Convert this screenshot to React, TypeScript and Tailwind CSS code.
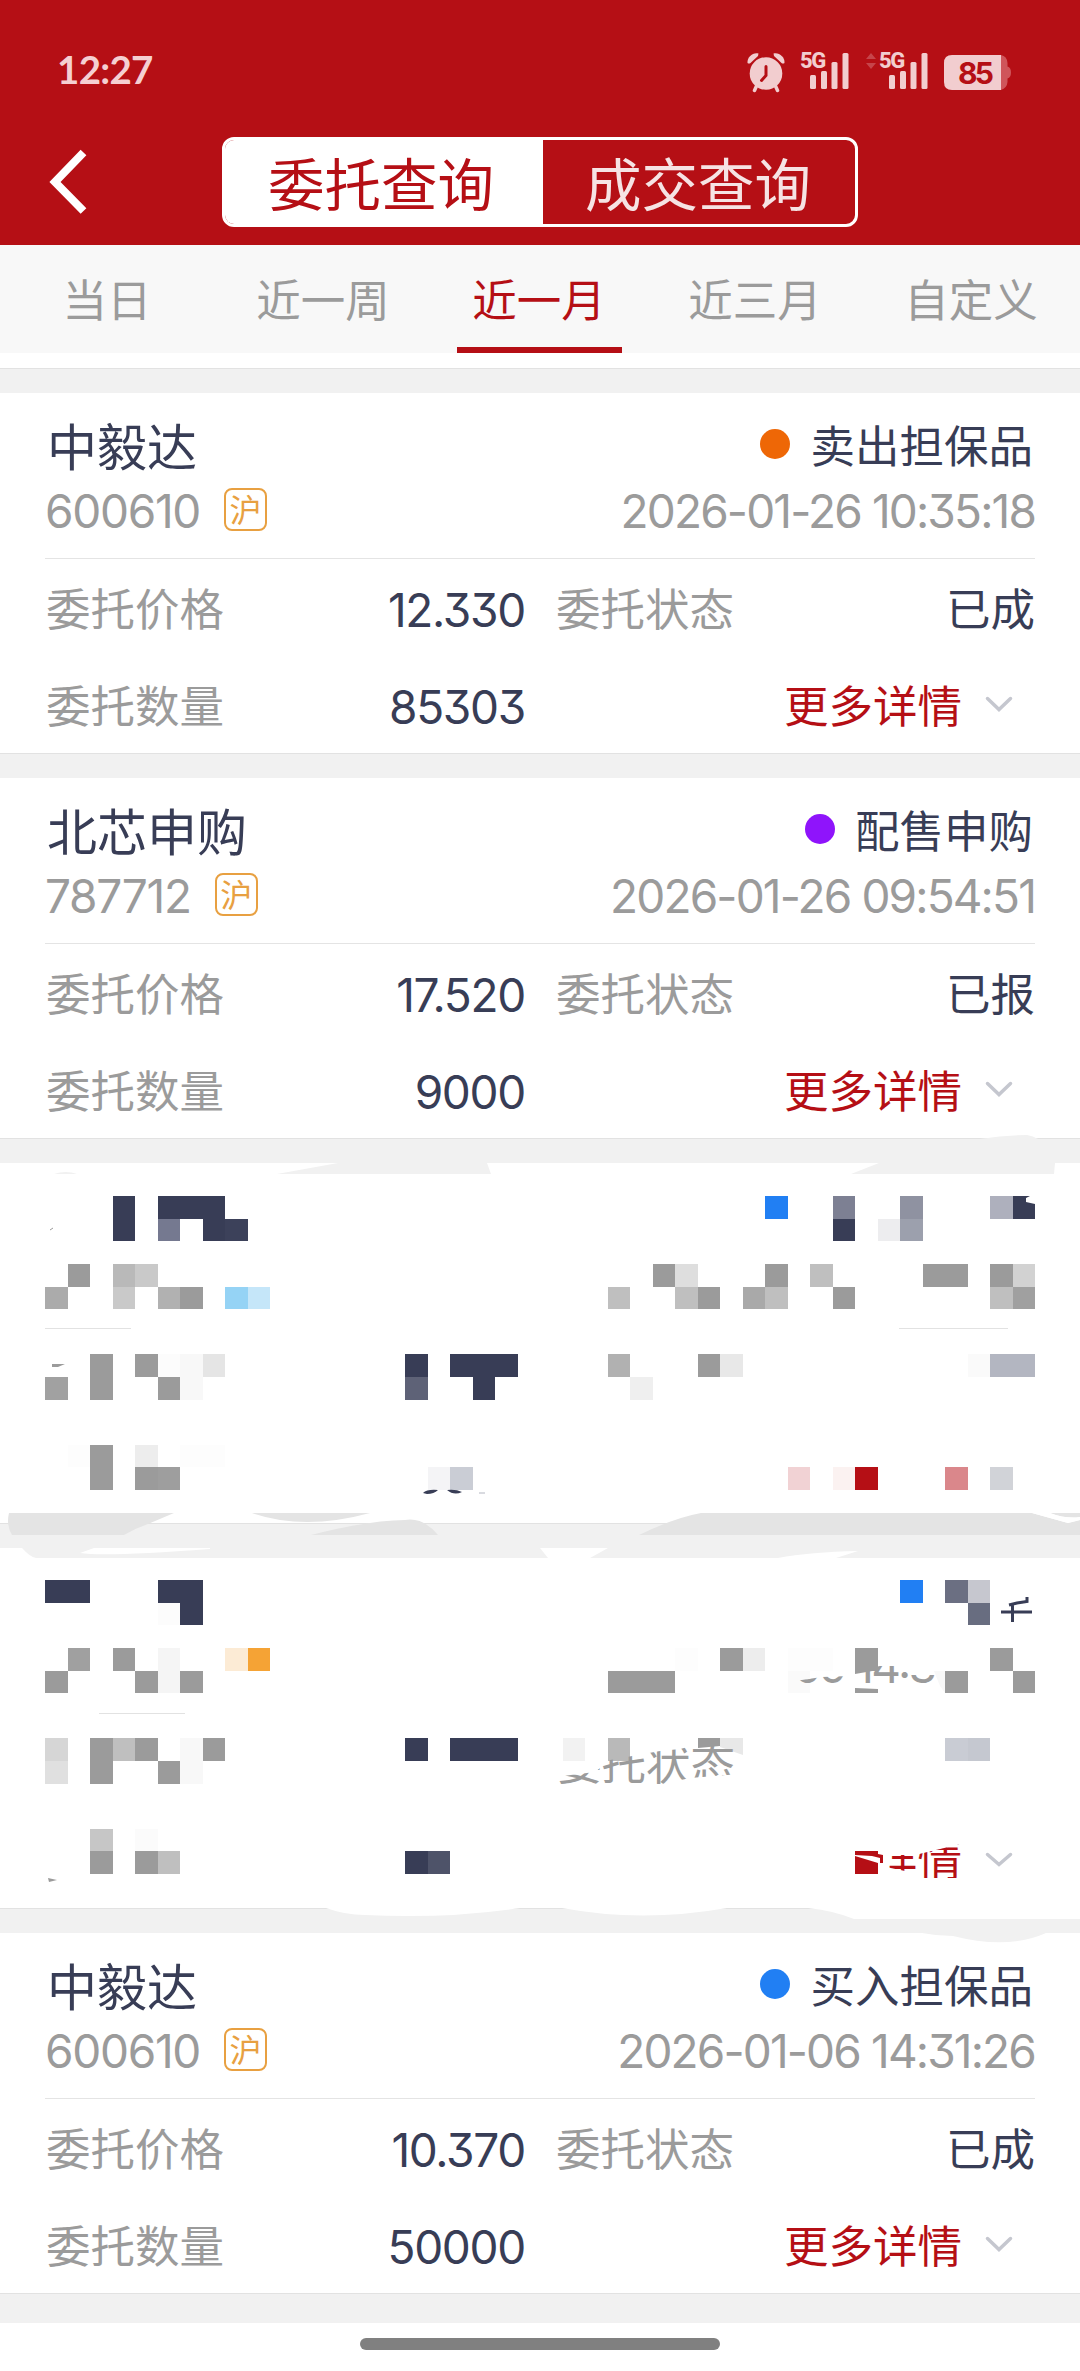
import { clsx } from "clsx";

type Cell = [col: number, row: number, fill: string, span?: number];

const RED = "#b50f15";
const INK = "#383d56";
const GREY = "#9b9b9b";
const BLUE = "#217ff3";

const TABS = ["当日", "近一周", "近一月", "近三月", "自定义"];

const FIRST_ORDERS = [
  {
    name: "中毅达",
    code: "600610",
    side: "卖出担保品",
    dot: "bg-[#ee6706]",
    time: "2026-01-26 10:35:18",
    price: "12.330",
    amount: "85303",
    status: "已成",
  },
  {
    name: "北芯申购",
    code: "787712",
    side: "配售申购",
    dot: "bg-[#8f14fb]",
    time: "2026-01-26 09:54:51",
    price: "17.520",
    amount: "9000",
    status: "已报",
  },
];

const LAST_ORDER = {
  name: "中毅达",
  code: "600610",
  side: "买入担保品",
  dot: "bg-[#217ff3]",
  time: "2026-01-06 14:31:26",
  price: "10.370",
  amount: "50000",
  status: "已成",
};

// [column, row, fill, columns spanned]
const MOSAIC_A: Cell[] = [
  [3, 0, INK], [5, 0, INK, 3], [32, 0, BLUE], [35, 0, "#7d8093"], [38, 0, "#8f92a1"],
  [42, 0, "#aeb0bd"], [43, 0, INK],
  [3, 1, INK], [5, 1, "#757990"], [7, 1, INK], [8, 1, "#3c415a"], [35, 1, INK],
  [37, 1, "#ededef"], [38, 1, "#9ca0ad"],
  [1, 2, GREY], [3, 2, "#b9b9b9"], [4, 2, "#c9c9c9"], [27, 2, GREY], [28, 2, "#dedede"],
  [32, 2, GREY], [34, 2, "#bfbfbf"], [39, 2, GREY, 2], [42, 2, GREY], [43, 2, "#d2d2d2"],
  [0, 3, "#ababab"], [3, 3, "#c9c9c9"], [5, 3, "#b1b1b1"], [6, 3, GREY], [8, 3, "#95d3f5"],
  [9, 3, "#c5e6f9"], [25, 3, "#bfbfbf"], [28, 3, "#bfbfbf"], [29, 3, GREY], [31, 3, "#a9a9a9"],
  [32, 3, "#bfbfbf"], [35, 3, GREY], [42, 3, "#bfbfbf"], [43, 3, "#a0a0a0"],
  [2, 4, GREY], [4, 4, GREY], [5, 4, "#fcfcfc"], [6, 4, "#f8f8f8"], [7, 4, "#e5e5e5"],
  [16, 4, INK], [18, 4, INK, 3], [25, 4, "#b1b1b1"], [29, 4, GREY], [30, 4, "#e8e8e8"],
  [41, 4, "#fafafa"], [42, 4, "#b3b6c1", 2],
  [0, 5, "#a1a1a1"], [2, 5, GREY], [5, 5, GREY], [6, 5, "#f8f8f8"], [16, 5, "#5e6277"],
  [19, 5, INK], [26, 5, "#efefef"],
  [1, 6, "#fdfdfd"], [2, 6, GREY], [4, 6, "#ededed"], [6, 6, "#fdfdfd", 2],
  [2, 7, GREY], [4, 7, GREY], [5, 7, "#9e9e9e"], [17, 7, "#f4f4f6"], [18, 7, "#cacdd5"],
  [33, 7, "#f1d2d4"], [35, 7, "#fbf2f1"], [36, 7, RED], [40, 7, "#da878b"], [42, 7, "#d1d3d8"],
];

const MOSAIC_B: Cell[] = [
  [0, 0, INK, 2], [5, 0, INK, 2], [38, 0, BLUE], [40, 0, "#6b6f82"], [41, 0, "#c6c7cf"],
  [5, 1, "#fcfcfc"], [6, 1, INK], [41, 1, "#686d80"],
  [1, 2, "#a0a0a0"], [3, 2, GREY], [5, 2, "#f5f5f5"], [8, 2, "#fcebd5"], [9, 2, "#f5a335"],
  [28, 2, "#fdfdfd"], [30, 2, GREY], [31, 2, "#ededed"], [33, 2, "#fdfdfd", 2], [36, 2, GREY],
  [42, 2, GREY],
  [0, 3, GREY], [4, 3, GREY], [5, 3, "#f5f5f5"], [6, 3, GREY], [25, 3, GREY, 3],
  [33, 3, "#fafafa"], [40, 3, GREY], [43, 3, GREY],
  [0, 4, "#d6d6d6"], [2, 4, GREY], [3, 4, "#bfbfbf"], [4, 4, GREY], [6, 4, "#f8f8f8"],
  [7, 4, GREY], [16, 4, INK], [18, 4, INK, 3], [23, 4, "#f2f2f2"], [25, 4, "#b9b9b9"],
  [40, 4, "#c9ccd4"], [41, 4, "#c5c8d0"],
  [0, 5, "#e0e0e0"], [2, 5, GREY], [5, 5, GREY], [6, 5, "#f8f8f8"],
  [2, 6, "#c6c6c6"], [4, 6, "#fbfbfb"],
  [2, 7, GREY], [4, 7, GREY], [5, 7, "#bfbfbf"], [16, 7, INK], [17, 7, "#4e5369"],
];

const COL = 22.5;

// top and bottom of each mosaic row
const ROW_EDGES = [
  [33, 56],
  [56, 78],
  [101, 124],
  [124, 146],
  [191, 214],
  [214, 237],
  [282, 304],
  [304, 327],
];

function Mosaic({ cells, shift = 0 }: { cells: Cell[]; shift?: number }) {
  return (
    <g shapeRendering="crispEdges">
      {cells.map(([col, row, fill, span = 1]) => {
        const x = Math.round(45 + col * COL);
        const [top, bottom] = ROW_EDGES[row];
        return (
          <rect
            key={`${col}-${row}`}
            x={x}
            y={top + shift}
            width={Math.round(45 + (col + span) * COL) - x}
            height={bottom - top}
            fill={fill}
          />
        );
      })}
    </g>
  );
}

function Chevron() {
  return (
    <svg className="h-4 w-7" viewBox="0 0 28 16" fill="none">
      <path
        d="M2.500 2.500 14 13.500 25.500 2.500"
        stroke="#c5c7cf"
        strokeWidth="3.500"
        strokeLinecap="round"
      />
    </svg>
  );
}

function Signal() {
  return (
    <div className="flex h-[38px] items-end">
      <span className="mr-[-14px] w-6 self-start pt-px font-['Roboto'] text-[22px] font-extrabold leading-[18px] tracking-[-1.500px] text-[#f2cdcf]">
        5G
      </span>
      <svg width="39" height="37" viewBox="0 0 39 37" fill="#f2cdcf">
        <rect x="0" y="23" width="6" height="14" rx="1.500" />
        <rect x="11" y="19" width="6" height="18" rx="1.500" />
        <rect x="21.500" y="10" width="6" height="27" rx="1.500" />
        <rect x="32.500" y="1" width="6" height="36" rx="1.500" />
      </svg>
    </div>
  );
}

function StatusBar() {
  return (
    <div className="flex h-[137px] items-start justify-between pl-[57px] pr-[69px] pt-[51px]">
      <div className="mt-[-3px] font-['Lato'] text-[38.500px] font-bold leading-[42px] tracking-[-0.700px] text-[#f5cfd2]">
        12:27
      </div>
      <div className="flex items-start">
        <svg width="38" height="42" viewBox="0 0 38 42">
          <g fill="#f2cdcf">
            <circle cx="19" cy="22.500" r="16.300" />
            <path d="M0.500 12C0 6 6 1 11.500 2.500L11 5 3.500 12Q2 13 0.500 12Z" />
            <path d="M37.500 12C38 6 32 1 26.500 2.500L27 5 34.500 12Q36 13 37.500 12Z" />
          </g>
          <path
            d="M9.500 35 7.500 39.500M28.500 35l2 4.500"
            stroke="#f2cdcf"
            strokeWidth="3.500"
            strokeLinecap="round"
          />
          <path
            d="M19 15.500v9l-4.500 5"
            fill="none"
            stroke={RED}
            strokeWidth="3"
            strokeLinecap="round"
          />
        </svg>
        <div className="ml-[15px]">
          <Signal />
        </div>
        <svg className="ml-[17px] mt-0.5" width="10" height="16" viewBox="0 0 10 16">
          <path d="M5 0 10 6H0ZM0 10h10L5 16Z" fill="#c6444a" />
        </svg>
        <div className="ml-[3px]">
          <Signal />
        </div>
        <svg className="ml-4 mt-1" width="67" height="35" viewBox="0 0 67 35">
          <path
            d="M57 0q6 1 6.500 8v3.500q3.500 1 3.500 6t-3.500 6V27q-.5 6-6.500 8Z"
            fill="#cf555a"
          />
          <path d="M8 0H57V35H8Q0 35 0 27V8Q0 0 8 0Z" fill="#f2cdcf" />
          <text
            x="32"
            y="28.500"
            textAnchor="middle"
            fill={RED}
            fontFamily="Inter, sans-serif"
            fontWeight="700"
            fontSize="30"
            textLength="36"
          >
            85
          </text>
        </svg>
      </div>
    </div>
  );
}

function Header() {
  return (
    <header className="h-[245px] bg-[#b50f15]">
      <StatusBar />
      <div className="flex h-[90px] items-center">
        <svg className="ml-[49px] mr-[133px]" width="40" height="66" viewBox="0 0 40 66">
          <path d="M34.500 3.500 6 33 34.500 62" fill="none" stroke="#fff" strokeWidth="8" />
        </svg>
        <div className="flex h-[90px] w-[636px] overflow-hidden rounded-xl border-[3px] border-white text-[56.500px] leading-none">
          <div className="flex w-[318px] items-center justify-center bg-white pb-0.5 pr-1.5 text-[#b50f15]">
            委托查询
          </div>
          <div className="flex flex-1 items-center justify-center pb-0.5 pr-0.5 text-[#f6e3e4]">
            成交查询
          </div>
        </div>
      </div>
    </header>
  );
}

function Tabs() {
  return (
    <nav className="flex h-[108px] bg-[#f8f8f8]">
      {TABS.map((tab) => (
        <div
          key={tab}
          className={clsx(
            "flex w-1/5 flex-col items-center text-[44.500px] leading-none",
            tab === "近一月" ? "text-[#b50f15]" : "text-[#9b9b9b]",
          )}
        >
          <span className="flex h-[102px] items-center pr-0.5 pt-1">{tab}</span>
          {tab === "近一月" && <span className="mr-px h-1.5 w-[165px] bg-[#b50f15]" />}
        </div>
      ))}
    </nav>
  );
}

function OrderCard({ order }: { order: typeof LAST_ORDER }) {
  return (
    <section className="h-[361px] border-b border-[#e2e2e2] bg-white px-[45px] pt-[22px] text-[#383d56]">
      <div className="flex h-[61px] items-center justify-between pb-0.5 leading-none">
        <span className="pb-0.5 pl-0.5 text-[50px]">{order.name}</span>
        <span className="flex items-center pr-0.5 text-[44.500px]">
          <i className={clsx("mb-0.5 mr-5 size-[30px] rounded-full", order.dot)} />
          {order.side}
        </span>
      </div>
      <div className="flex h-[70px] items-center justify-between leading-none text-[#9b9b9b]">
        <span className="flex items-center">
          <span className="font-['Inter'] text-[46px] tracking-[-1.300px] [font-feature-settings:'cv09']">
            {order.code}
          </span>
          <span className="mb-1 ml-6 flex size-[43px] items-center justify-center rounded-lg border-[2.500px] border-[#e8a041] pb-0.5 text-[32px] text-[#e8a041]">
            沪
          </span>
        </span>
        <span className="font-['Inter'] text-[46px] tracking-[-1.850px] [font-feature-settings:'cv09']">
          {order.time}
        </span>
      </div>
      <div className="mb-0.5 mt-3 h-px bg-[#e4e4e4]" />
      <div className="flex h-[97px] items-center text-[44.500px] leading-none">
        <span className="pb-1 pl-px text-[#9b9b9b]">委托价格</span>
        <span className="w-[301px] text-right font-['Inter'] text-[46px] tracking-[-1.300px] [font-feature-settings:'cv09']">
          {order.price}
        </span>
        <span className="ml-[31px] pb-1 text-[#9b9b9b]">委托状态</span>
        <span className="ml-auto pb-1">{order.status}</span>
      </div>
      <div className="flex h-[97px] items-center text-[44.500px] leading-none">
        <span className="pb-1 pl-px text-[#9b9b9b]">委托数量</span>
        <span className="w-[301px] text-right font-['Inter'] text-[46px] tracking-[-1.300px] [font-feature-settings:'cv09']">
          {order.amount}
        </span>
        <span className="ml-auto mr-[23px] pb-1 text-[#b50f15]">更多详情</span>
        <span className="mb-1.5 mr-[22px]">
          <Chevron />
        </span>
      </div>
    </section>
  );
}

function HiddenCardA() {
  return (
    <section className="h-[361px] border-b border-[#e2e2e2] bg-white">
      <svg className="block overflow-visible" width="1080" height="385" viewBox="0 0 1080 385">
        {/* smudges on the upper edge */}
        <g fill="#f1f1f1">
          <path d="M277 11 338 0H487L491 11ZM851 11 879 0H1055L1054 11ZM54 11q12-4 23 0Z" />
          <path d="M980-24Q1005-28 1027-28 1033-27 1038-24Z" />
        </g>
        <Mosaic cells={MOSAIC_A} />
        <path d="M1035 33v8l-9-2v-4l6-3Z" fill="#fff" />
        <path d="M45 165.500h86M899 165.500h109" stroke="#e2e2e2" />
        <path d="M52 201h13l-7 3h-6Z" fill={GREY} />
        <path d="M50 67l3-2" stroke={GREY} />
        <g fill={INK}>
          <path d="M423 330q4-4 15-3-4 4-11 4ZM447 327q9-1 15 2-8 4-15-2Z" />
          <path d="M479 330h6" stroke="#b3b6c1" />
        </g>
        {/* smudges on the lower edge */}
        <g fill="#e4e4e4">
          <path d="M9 350H174L148 361Q136 365 124 372H12Q6 362 9 350Z" />
          <path d="M252 350H370Q304 368 252 350Z" />
          <path d="M311 372Q370 357 405 357 423 354 438 372Z" />
          <path d="M639 372Q674 355 701 350H1032L1068 360 1080 357V372ZM1050 350H1080V354Q1066 356 1050 350Z" />
        </g>
        <path d="M1032 350h18q15 6 30 4v3l-12 3Z" fill="#fff" />
      </svg>
    </section>
  );
}

function HiddenCardB() {
  return (
    <section className="relative h-[361px] border-b border-[#e2e2e2] bg-white">
      <svg className="block overflow-visible" width="1080" height="385" viewBox="0 0 1080 385">
        <defs>
          <clipPath id="state">
            <path d="M555 229 595 224 610 212 660 203 680 201 700 196H740V226L690 230 645 240H555Z" />
          </clipPath>
          <clipPath id="detail">
            <path d="M886 307H915L965 295V330H918V323H905L886 319Z" />
          </clipPath>
          <clipPath id="clock">
            <path d="M795 133 822 129 850 128 855 123 880 118H900V123H911V127H937V137H795Z" />
          </clipPath>
        </defs>
        <path
          d="M22 0H94L80 5Q105 9 210 1V0H540L548 10H36Q30 9 22 0ZM608 0H1080V10H836L858 3Q810 4 778 10H590Z"
          fill="#f1f1f1"
        />
        <Mosaic cells={MOSAIC_B} shift={-1} />
        <path d="M698 190h22v8l-22 2Z" fill={GREY} />
        <path d="M720 190h23v17l-23-8Z" fill="#e8e8e8" />
        <path d="M934 123h11v22l-5-7Z" fill="#f8f8f8" />
        <path d="M99 165.500h86" stroke="#e2e2e2" />
        <path d="M48 330l9 2-8 2Z" fill={GREY} />
        <path
          d="M1001 64h31M1012.500 74V57M1009 57l8-2 10-1.500v-4.500"
          fill="none"
          stroke={INK}
          strokeWidth="3"
        />
        <path d="M855 122h23l-23 4Z" fill={GREY} />
        <path d="M855 140l23 1v4h-23Z" fill={GREY} />
        <path d="M855 303h23v3l5 1v8h-3v-5l-8-2-17-1ZM855 308 878 315v11h-23Z" fill={RED} />
        <g fontFamily="'Noto Sans CJK SC', sans-serif" fontSize="44.500">
          <text x="557" y="232" fill={GREY} clipPath="url(#state)">
            委托状态
          </text>
          <text x="873" y="328" fill={RED} clipPath="url(#detail)">
            详情
          </text>
        </g>
        <text
          x="793"
          y="135"
          fill={GREY}
          fontFamily="Inter, sans-serif"
          fontSize="46"
          textLength="144"
          clipPath="url(#clock)"
        >
          09 14:3
        </text>
        <path
          d="M987.500 306.500 999 316.500 1010.500 306.500"
          fill="none"
          stroke="#c5c7cf"
          strokeWidth="3.500"
          strokeLinecap="round"
        />
        <path
          d="M326 360Q345 367 365 367 445 371 520 360ZM562 360Q642 375 727 360ZM808 360Q835 363 854 371H1080V360Z"
          fill="#fff"
        />
        <path d="M922 385Q937 388 953 388 1008 402 1046 385Z" fill="#f1f1f1" />
      </svg>
    </section>
  );
}

export default function App() {
  return (
    <div className="h-[2371px] w-[1080px] overflow-hidden bg-white font-['Noto_Sans_CJK_SC',sans-serif]">
      <Header />
      <Tabs />
      <div className="h-[15px] bg-white" />
      <main className="flex flex-col gap-6 border-t border-[#e2e2e2] bg-[#f1f1f1] pb-[29px] pt-6">
        {FIRST_ORDERS.map((order) => (
          <OrderCard key={order.code} order={order} />
        ))}
        <HiddenCardA />
        <HiddenCardB />
        <OrderCard order={LAST_ORDER} />
      </main>
      <div className="mx-auto mt-[15px] h-3 w-[360px] rounded-full bg-[#808080]" />
    </div>
  );
}
